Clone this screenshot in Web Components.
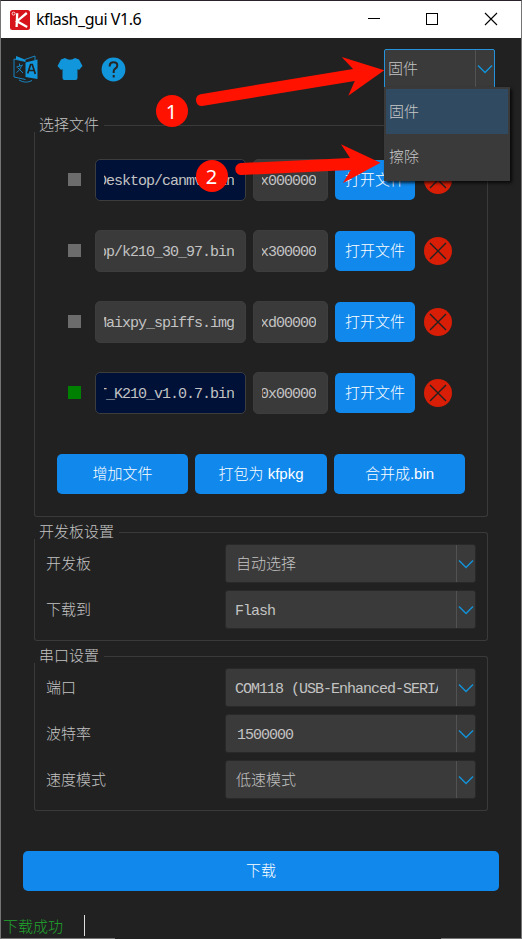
<!DOCTYPE html>
<html lang="zh-CN">
<head>
<meta charset="utf-8">
<title>kflash_gui V1.6</title>
<style>
html, body { margin: 0; padding: 0; background: #212121; }
body { width: 522px; height: 939px; overflow: hidden; font: 300 15px/20px "Liberation Sans", "Noto Sans CJK SC", sans-serif; }
</style>
</head>
<body>
<kf-window></kf-window>
<script>
function define(name, html, setup) {
  const t = document.createElement('template');
  t.innerHTML = html;
  customElements.define(name, class extends HTMLElement {
    constructor() {
      super();
      this.attachShadow({ mode: 'open' }).appendChild(t.content.cloneNode(true));
    }
    connectedCallback() { if (setup) setup(this, this.shadowRoot); }
  });
}

define('kf-title-bar', `
<style>
:host { display: flex; align-items: center; height: 37px; box-sizing: border-box; background: #fff; color: #000; padding: 0 0 0 9px; flex: none; }
.name { font: 16px/24px "Noto Sans", "Open Sans", sans-serif; letter-spacing: -0.45px; margin: -2px 0 0 6px; flex: 1; white-space: nowrap; }
svg { display: block; flex: none; }
</style>
<svg width="20" height="20" viewBox="0 0 20 20"><rect width="20" height="20" rx="2.5" fill="#d7141c"/><circle cx="3.6" cy="3.6" r="1.5" fill="none" stroke="#fff" stroke-width=".8"/><path d="M7.2 3.2L6.6 17M16.8 3L7 11.2L17.2 17" fill="none" stroke="#fff" stroke-width="2.3"/></svg>
<span class="name">kflash_gui V1.6</span>
<svg width="154" height="37" viewBox="0 0 154 37" fill="none" stroke="#000" shape-rendering="crispEdges"><path d="M1 17.5h12"/><rect x="59.500" y="12.500" width="11" height="11"/><path d="M118 12l12 12M130 12l-12 12" shape-rendering="auto" stroke-width="1.1"/></svg>`);

define('kf-toolbar', `
<style>
:host { display: flex; gap: 18px; align-items: center; }
svg { display: block; }
</style>
<svg width="27" height="28" viewBox="0 0 27 28"><g fill="none" stroke="#168fd3" stroke-width=".9"><path d="M13.500 6.500L2 4V22L13.500 24.500M13 4.500L23 1V5"/><path d="M4.500 12L11 10M7.500 8.500v2.500M9.500 11Q8 15.500 4.500 17.500M5.500 12.500L11 18"/><path d="M7 25Q13.500 29 20 25.500"/></g><path d="M4 1l9.500 3.800v1.700l-9.500-2.300zM13.500 7.500L25.500 4.500V24L13.500 22z" fill="#1296db"/><path d="M15.700 18.500L18.600 9.500h1.700l3 9.500M16.700 15.500h5.400" fill="none" stroke="#212121" stroke-width="1.700"/></svg>
<svg width="26" height="24" viewBox="0 0 26 24"><path d="M8 1Q13 4.500 18 1L22 2.500L25.500 9L22 13L20.500 12V21Q20.500 23 18.500 23H7.500Q5.500 23 5.500 21V12L4 13L.5 9L4 2.500Z" fill="#1296db"/></svg>
<svg width="25" height="25" viewBox="0 0 25 25"><circle cx="12.500" cy="12.500" r="11.900" fill="#1296db"/><path d="M8.700 9.500V8.600Q9 5.300 12.500 5.300Q16.300 5.300 16.300 8.500Q16.300 10.200 14.500 11.300Q12.700 12.500 12.700 14V16M12.700 18v2.500" fill="none" stroke="#262626" stroke-width="2"/></svg>`);

define('kf-combo', `
<style>
:host { display: flex; box-sizing: border-box; width: 251px; height: 39px; border: 1px solid #292929; border-radius: 3px; background: #3a3a3a; color: #c3c3c3; padding-left: 10px; }
.text { flex: 1; min-width: 0; margin-right: 18px; overflow: hidden; white-space: nowrap; line-height: 37px; }
.drop { width: 18px; flex: none; border-left: 1px solid #525252; display: grid; place-items: center; }
:host([mono]) { padding-left: 9px; }
:host([number]) { padding-left: 11px; }
:host([mono]) .text { font: 15px/41px "Liberation Mono", monospace; letter-spacing: -1px; }
:host([active]) { width: 111px; height: 40px; border-color: #2493dc; border-radius: 2px; padding-left: 3px; }
:host([active]) .text { margin-right: 0; }
svg { display: block; }
</style>
<div class="text"><slot></slot></div>
<div class="drop"><svg width="16" height="10" viewBox="0 0 16 10"><path d="M1 1.500l7 7l7-7" fill="none" stroke="#1491d6" stroke-width="1.500"/></svg></div>`);

define('kf-button', `
<style>
:host { display: flex; align-items: center; justify-content: center; box-sizing: border-box; height: 40px; border-radius: 5px; background: #1088ec; color: #fff; white-space: nowrap; flex: none; }
</style><slot></slot>`);

define('kf-field', `
<style>
:host { display: flex; justify-content: flex-end; align-items: center; box-sizing: border-box; height: 42px; border: 1px solid #3d3d3d; border-radius: 5px; background: #3a3a3a; color: #c3c3c3; padding: 4px 11px 0 8px; flex: none; }
:host([selected]) { background: #001138; }
.clip { flex: 1; min-width: 0; overflow: hidden; display: flex; justify-content: flex-end; font: 15px/24px "Liberation Mono", monospace; letter-spacing: -1px; white-space: nowrap; }
</style><div class="clip"><span><slot></slot></span></div>`);

define('kf-file-row', `
<style>
:host { display: flex; align-items: center; height: 42px; }
.check { width: 13px; height: 13px; background: #6c6c6c; margin: 0 14px 1px 0; }
:host([checked]) .check { background: #008000; }
.path { width: 151px; margin-right: 7px; }
.addr { width: 75px; margin-right: 7px; }
kf-button { width: 80px; margin-right: 9px; }
svg { display: block; flex: none; }
</style>
<div class="check"></div><kf-field class="path"></kf-field><kf-field class="addr"></kf-field><kf-button>打开文件</kf-button>
<svg width="28" height="28" viewBox="0 0 28 28"><circle cx="14" cy="14" r="14" fill="#d81e06"/><path d="M6 6l16 16M22 6L6 22" stroke="#212121" stroke-width="1.400"/></svg>`,
(el, root) => {
  root.querySelector('.path').textContent = el.getAttribute('path');
  root.querySelector('.addr').textContent = el.getAttribute('addr');
  root.querySelector('.path').toggleAttribute('selected', el.hasAttribute('selected'));
});

define('kf-group', `
<style>
:host { display: grid; grid-template-rows: 8px 1fr; margin: 0 33px; width: 454px; box-sizing: border-box; color: #c3c3c3; }
.head { display: flex; height: 8px; align-items: flex-start; }
.title { margin: -2px 5px 0 5px; height: 20px; line-height: 20px; white-space: nowrap; flex: none; }
.line { flex: 1; height: 7px; box-sizing: border-box; border-top: 1px solid #3a3a3a; border-right: 1px solid #3a3a3a; border-radius: 0 3px 0 0; margin-top: 8px; }
.body { margin-top: 7px; border: 1px solid #3a3a3a; border-top: 0; border-radius: 0 0 3px 3px; }
</style>
<div class="head"><span class="title"></span><span class="line"></span></div>
<div class="body"><slot></slot></div>`,
(el, root) => { root.querySelector('.title').textContent = el.getAttribute('heading'); });

define('kf-setting', `
<style>
:host { display: flex; height: 39px; align-items: center; justify-content: space-between; padding: 0 11px; }
</style><span><slot name="label"></slot></span><slot></slot>`);

define('kf-menu', `
<style>
:host { display: block; box-sizing: border-box; width: 126px; height: 94px; padding: 2px; background: #3a3a3a; box-shadow: 2px 2px 3px rgba(0,0,0,.75); color: #c8c8c8; }
div { height: 45px; line-height: 45px; padding-left: 3px; }
.current { background: #304b61; }
</style><div class="current">固件</div><div>擦除</div>`);

define('kf-annotations', `
<style>
:host { display: block; width: 522px; height: 210px; pointer-events: none; }
svg { display: block; }
text { font: 20px "Noto Sans", sans-serif; fill: #fff; text-anchor: middle; }
</style>
<svg width="522" height="210" viewBox="0 0 522 210" fill="#ff1200">
<path d="M200.500 94.200L353 69L341.700 57L384.300 70.300L348.300 95.700L354.700 81L202 106A6 6 0 0 1 200.500 94.200Z"/>
<path d="M241 163L350 158L341 144.300L380.500 162.700L343 183L350.700 170L241.500 175A6 6 0 0 1 241 163Z"/>
<circle cx="172" cy="111" r="16"/><circle cx="212" cy="176" r="16"/>
<text x="171.500" y="118.500">1</text><text x="211.500" y="184">2</text>
</svg>`);

define('kf-status', `
<style>
:host { display: flex; align-items: center; height: 24px; padding-left: 2px; color: #20a62d; }
span { padding-top: 3px; }
i { width: 1px; height: 21px; background: #ddd; margin-left: 21px; }
</style><span><slot></slot></span><i></i>`);

define('kf-window', `
<style>
:host { display: flex; flex-direction: column; position: relative; box-sizing: border-box; width: 522px; height: 939px; background: #212121; border: solid #747474; border-width: 1px 1px 0; border-top-color: #29222a; overflow: hidden; }
.top { display: flex; justify-content: space-between; align-items: flex-start; height: 79px; padding: 11px 26px 0 11px; box-sizing: border-box; flex: none; }
kf-toolbar { margin-top: 6px; }
kf-group { flex: none; }
.files { height: 400px; }
.rows { display: grid; gap: 29px; padding: 27px 0 0 33px; }
.actions { display: flex; gap: 7px; padding: 40px 0 0 22px; }
.board { height: 117px; margin-top: 7px; }
.serial { height: 163px; margin-top: 7px; }
.settings { display: grid; gap: 7px; padding-top: 5px; }
.download { margin: 40px 22px 0; }
kf-status { margin-top: 22px; }
kf-menu { position: absolute; left: 383px; top: 86px; }
kf-annotations { position: absolute; left: -1px; top: -1px; }
.edge { position: absolute; bottom: 0; height: 1px; background: #747474; }
</style>
<kf-title-bar></kf-title-bar>
<div class="top"><kf-toolbar></kf-toolbar><kf-combo active>固件</kf-combo></div>
<kf-group class="files" heading="选择文件">
  <div class="rows">
    <kf-file-row path="Desktop/canmv.bin" addr="x000000" selected></kf-file-row>
    <kf-file-row path="op/k210_30_97.bin" addr="x300000"></kf-file-row>
    <kf-file-row path="Maixpy_spiffs.img" addr="xd00000"></kf-file-row>
    <kf-file-row path="T_K210_v1.0.7.bin" addr="0x00000" selected checked></kf-file-row>
  </div>
  <div class="actions">
    <kf-button style="width:131px">增加文件</kf-button><kf-button style="width:132px">打包为 kfpkg</kf-button><kf-button style="width:131px">合并成.bin</kf-button>
  </div>
</kf-group>
<kf-group class="board" heading="开发板设置">
  <div class="settings">
    <kf-setting><span slot="label">开发板</span><kf-combo>自动选择</kf-combo></kf-setting>
    <kf-setting><span slot="label">下载到</span><kf-combo mono>Flash</kf-combo></kf-setting>
  </div>
</kf-group>
<kf-group class="serial" heading="串口设置">
  <div class="settings">
    <kf-setting><span slot="label">端口</span><kf-combo mono>COM118 (USB-Enhanced-SERIAL</kf-combo></kf-setting>
    <kf-setting><span slot="label">波特率</span><kf-combo mono number>1500000</kf-combo></kf-setting>
    <kf-setting><span slot="label">速度模式</span><kf-combo>低速模式</kf-combo></kf-setting>
  </div>
</kf-group>
<kf-button class="download">下载</kf-button>
<kf-status>下载成功</kf-status>
<kf-menu></kf-menu>
<kf-annotations></kf-annotations>
<span class="edge" style="left:-1px;width:115px"></span><span class="edge" style="right:-1px;width:81px"></span>`);
</script>
</body>
</html>
